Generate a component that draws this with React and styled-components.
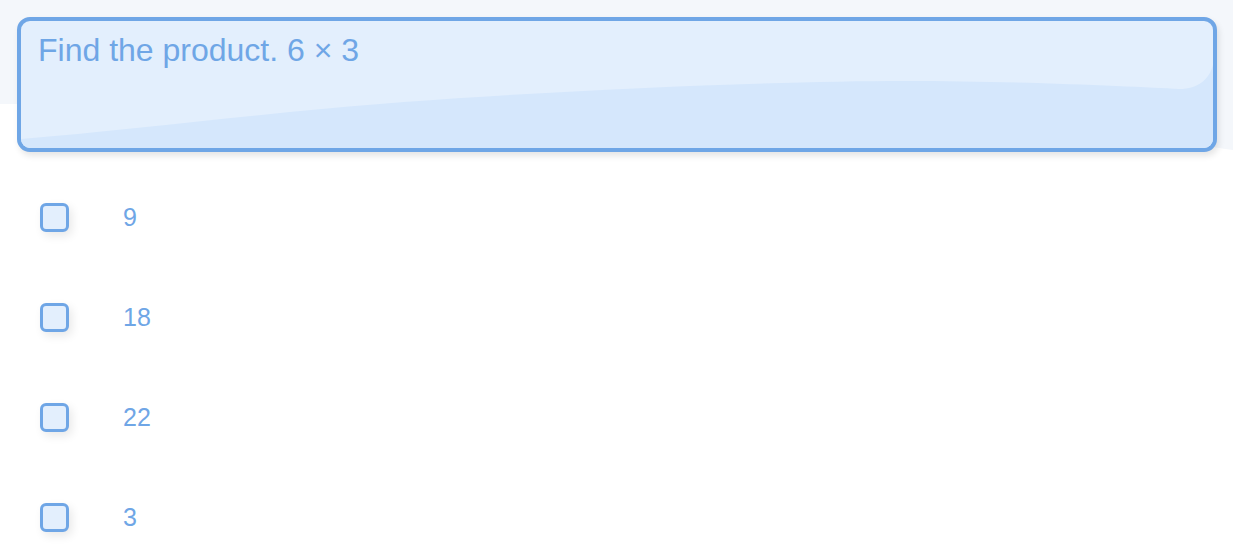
import React from "react";
import styled, { createGlobalStyle } from "styled-components";

const GlobalStyle = createGlobalStyle`
  html, body {
    margin: 0;
    padding: 0;
    background: #ffffff;
  }
  body {
    font-family: "Liberation Sans", Arial, sans-serif;
  }
`;

const options = ["9", "18", "22", "3"];

const App = () => {
  return (
    <>
      <GlobalStyle />
      <Page>
        <Backdrop viewBox="0 0 1233 200" preserveAspectRatio="none">
          <path d="M0 0 H1233 V150 C1100 130 700 110 420 108 C200 106 60 104 0 104 Z" fill="#f4f7fb" />
        </Backdrop>
        <Question>
          <Gloss viewBox="0 0 1192 127" preserveAspectRatio="none">
            <path
              d="M0 118 C120 108 260 90 383 81 C560 68 760 60 883 60 C1000 60 1120 66 1158 68 C1178 68 1188 58 1192 44 V127 H0 Z"
              fill="#d5e7fc"
            />
          </Gloss>
          <Prompt>Find the product. 6 × 3</Prompt>
        </Question>
        <Options>
          {options.map((opt) => (
            <Option key={opt}>
              <Box />
              <Label>{opt}</Label>
            </Option>
          ))}
        </Options>
      </Page>
    </>
  );
};

export default App;

const Page = styled.div`
  position: relative;
  width: 1233px;
  height: 557px;
  overflow: hidden;
  padding: 17px 16px 0 17px;
  box-sizing: border-box;
`;

const Backdrop = styled.svg`
  position: absolute;
  left: 0;
  top: 0;
  width: 1233px;
  height: 200px;
  z-index: 0;
`;

const Question = styled.div`
  position: relative;
  z-index: 1;
  width: 1200px;
  height: 135px;
  box-sizing: border-box;
  border: 4px solid #6fa6e6;
  border-radius: 13px;
  background: #e3effd;
  box-shadow: 2px 4px 6px rgba(0, 0, 0, 0.1);
  overflow: hidden;
  padding: 11px 17px;
`;

const Gloss = styled.svg`
  position: absolute;
  left: 0;
  top: 0;
  width: 100%;
  height: 100%;
`;

const Prompt = styled.div`
  position: relative;
  font-size: 32px;
  color: #6fa6e6;
`;

const Options = styled.div`
  position: relative;
  z-index: 1;
  display: flex;
  flex-direction: column;
  gap: 71px;
  padding: 51px 0 0 23px;
`;

const Option = styled.div`
  display: flex;
  align-items: center;
  gap: 54px;
  height: 29px;
`;

const Box = styled.div`
  width: 29px;
  height: 29px;
  box-sizing: border-box;
  border: 3px solid #6fa6e6;
  border-radius: 6px;
  background: #e3effd;
  box-shadow: 3px 4px 10px rgba(0, 0, 0, 0.09);
  flex-shrink: 0;
`;

const Label = styled.span`
  font-size: 25px;
  color: #6fa6e6;
  line-height: 29px;
`;
